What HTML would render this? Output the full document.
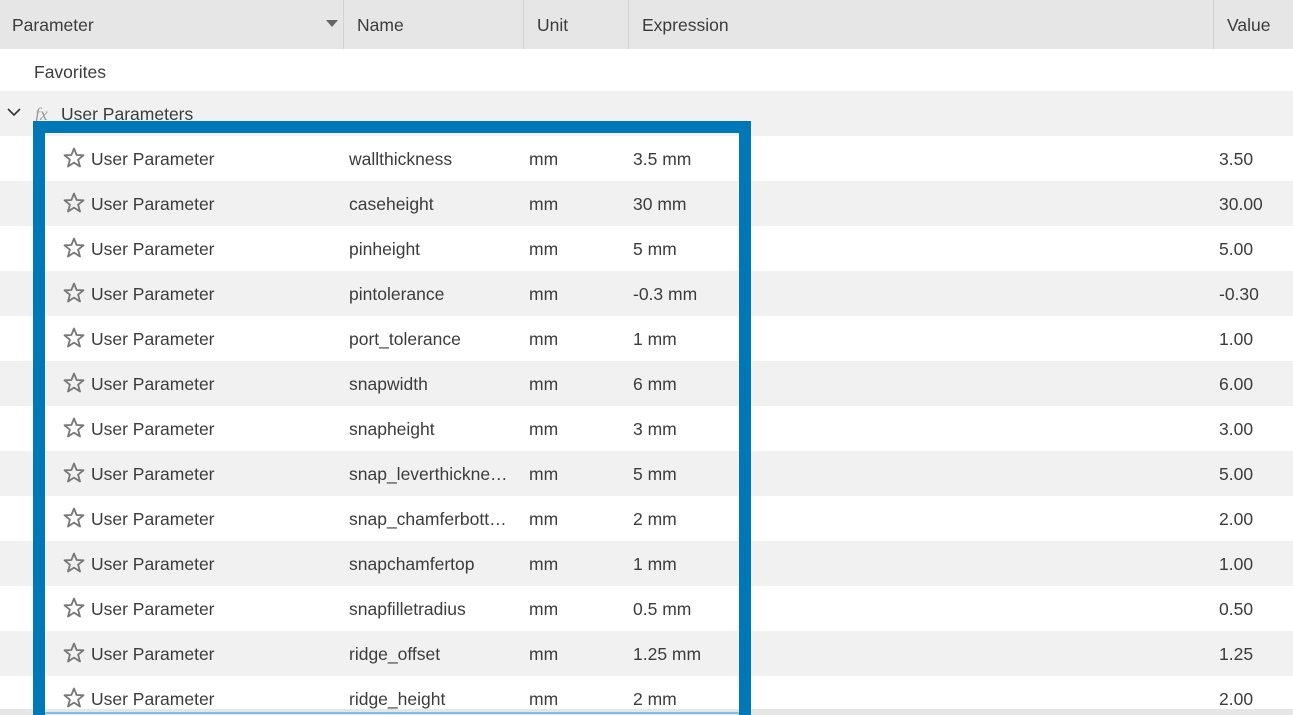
<!DOCTYPE html>
<html style="overflow:hidden;height:715px"><head><style>
body{margin:0;width:1293px;height:715px;overflow:hidden;background:#fff;font-family:"Liberation Sans",sans-serif;font-size:17.5px;color:#3c3c3c;position:relative}
.hdr{position:absolute;left:0;top:0;width:1293px;height:49px;background:#e6e6e6}
.sep{position:absolute;top:0;height:49px;width:1px;background:#d2d2d2}
.t{position:absolute;white-space:nowrap;line-height:20px}
.row{position:absolute;left:0;width:1293px;height:45px}
.g{background:#f1f1f1}
.frame{position:absolute;left:33px;top:121px;width:694px;height:582px;border:12px solid #0078b8;border-bottom:0}
</style></head><body>
<div class="hdr"></div>
<div class="sep" style="left:343px"></div><div class="sep" style="left:523px"></div><div class="sep" style="left:628px"></div><div class="sep" style="left:1213px"></div>
<div class="t" style="left:12px;top:15px">Parameter</div>
<div style="position:absolute;left:326px;top:20px;width:0;height:0;border-left:6px solid transparent;border-right:6px solid transparent;border-top:7px solid #666"></div>
<div class="t" style="left:357px;top:15px">Name</div>
<div class="t" style="left:537px;top:15px">Unit</div>
<div class="t" style="left:642px;top:15px">Expression</div>
<div class="t" style="left:1227px;top:15px">Value</div>
<div class="t" style="left:34px;top:62px">Favorites</div>
<div class="row g" style="top:91px"></div>
<svg style="position:absolute;left:7px;top:107px" width="14" height="10"><path d="M1 2 L7 8 L13 2" fill="none" stroke="#333" stroke-width="1.6"/></svg>
<div class="t" style="left:35px;top:104px;font-family:'Liberation Serif',serif;font-style:italic;color:#999">fx</div>
<div class="t" style="left:61px;top:104px">User Parameters</div>
<div id="rows"></div>
<div style="position:absolute;left:0;top:709px;width:1293px;height:6px;background:#e6e6e6"></div>
<div style="position:absolute;left:45px;top:712px;width:694px;height:2px;background:#7cc0e8"></div>
<div class="frame"></div>
<script>
var d=[["wallthickness","3.5 mm","3.50"],["caseheight","30 mm","30.00"],["pinheight","5 mm","5.00"],["pintolerance","-0.3 mm","-0.30"],["port_tolerance","1 mm","1.00"],["snapwidth","6 mm","6.00"],["snapheight","3 mm","3.00"],["snap_leverthickne…","5 mm","5.00"],["snap_chamferbott…","2 mm","2.00"],["snapchamfertop","1 mm","1.00"],["snapfilletradius","0.5 mm","0.50"],["ridge_offset","1.25 mm","1.25"],["ridge_height","2 mm","2.00"]];
var h="";
d.forEach(function(r,i){var y=136+45*i;var ty=y+13;
h+='<div class="row'+(i%2?' g':'')+'" style="top:'+y+'px"></div>';
h+='<svg style="position:absolute;left:63px;top:'+(y+11)+'px" width="22" height="22" viewBox="0 0 22 22"><path d="M11 1.5 L13.6 8 L20.5 8.3 L15.1 12.7 L17 19.5 L11 15.6 L5 19.5 L6.9 12.7 L1.5 8.3 L8.4 8 Z" fill="none" stroke="#777" stroke-width="1.8" stroke-linejoin="round"/></svg>';
h+='<div class="t" style="left:91px;top:'+ty+'px">User Parameter</div>';
h+='<div class="t" style="left:349px;top:'+ty+'px">'+r[0]+'</div>';
h+='<div class="t" style="left:529px;top:'+ty+'px">mm</div>';
h+='<div class="t" style="left:633px;top:'+ty+'px">'+r[1]+'</div>';
h+='<div class="t" style="left:1219px;top:'+ty+'px">'+r[2]+'</div>';});
document.getElementById("rows").innerHTML=h;
</script>
</body></html>
